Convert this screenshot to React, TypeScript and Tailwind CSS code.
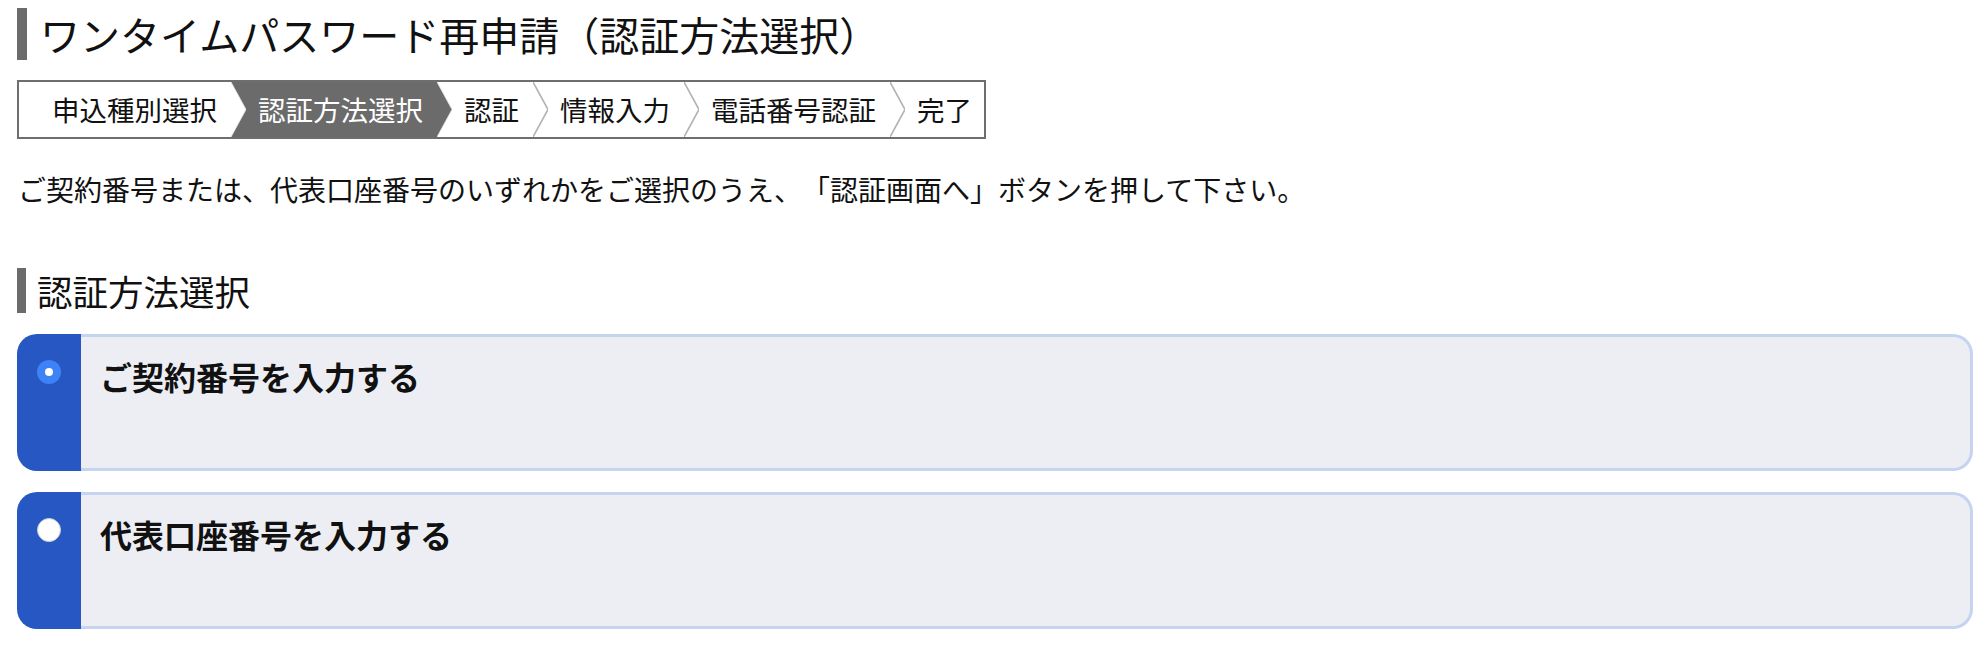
import React from 'react';

const font = { fontFamily: '"Noto Sans CJK JP", "Noto Sans", sans-serif' };

const steps = ['申込種別選択', '認証方法選択', '認証', '情報入力', '電話番号認証', '完了'];
const activeStep = 1;

function Separator({ left, right }: { left: boolean; right: boolean }) {
  return (
    <svg className="w-[15px] h-full shrink-0" viewBox="0 0 15 55" preserveAspectRatio="none">
      {right && <polygon points="0,0 15,0 15,55 0,55 15,27.5" fill="#6b6b6b" />}
      {left && <polygon points="0,0 15,27.5 0,55" fill="#6b6b6b" />}
      {!left && !right && (
        <polyline points="0,0 15,27.5 0,55" fill="none" stroke="#b3b3b3" strokeWidth="1.6" />
      )}
      {(left || right) && (
        <polyline points="0,0 15,27.5 0,55" fill="none" stroke="#e6e6e6" strokeWidth="0.8" />
      )}
    </svg>
  );
}

function Radio({ checked }: { checked: boolean }) {
  if (checked) {
    return (
      <div className="w-[24px] h-[24px] rounded-full bg-[#3d82f6] flex items-center justify-center">
        <div className="w-[8px] h-[8px] rounded-full bg-white" />
      </div>
    );
  }
  return <div className="w-[24px] h-[24px] rounded-full bg-white border border-[#c8ccd4]" />;
}

function OptionCard({ label, checked }: { label: string; checked: boolean }) {
  return (
    <div className="flex h-[137px]">
      <div className="w-[64px] shrink-0 bg-[#2757c2] rounded-l-[20px] flex justify-center pt-[26px]">
        <Radio checked={checked} />
      </div>
      <div className="flex-1 bg-[#eceef4] border-y-[3px] border-r-[3px] border-[#c4d4f1] rounded-r-[20px] pl-[19px] pt-[15px]">
        <div className="text-[32px] leading-[48px] font-bold text-[#111]">{label}</div>
      </div>
    </div>
  );
}

export default function App() {
  return (
    <div className="bg-white min-h-screen pl-[17px] pt-[8px] text-[#111] [text-spacing-trim:space-all]" style={font}>
      <div className="flex items-center h-[52px]">
        <div className="w-[10px] h-[52px] bg-[#6b6b6b]" />
        <h1 className="ml-[13px] text-[40px] font-normal leading-none">
          ワンタイムパスワード再申請（認証方法選択）
        </h1>
      </div>

      <div className="mt-[20px] inline-flex h-[59px] border-2 border-[#6e6e6e] text-[27.5px]">
        {steps.map((s, i) => (
          <React.Fragment key={s}>
            <div
              className={`flex items-center whitespace-nowrap ${i === 0 ? 'pl-[33px]' : 'pl-[12px]'} ${
                i === steps.length - 1 ? 'pr-[12px]' : 'pr-[14px]'
              } ${i === activeStep ? 'bg-[#6b6b6b] text-white' : 'text-[#111]'}`}
            >
              {s}
            </div>
            {i < steps.length - 1 && <Separator left={i === activeStep} right={i + 1 === activeStep} />}
          </React.Fragment>
        ))}
      </div>

      <p className="mt-[30px] text-[28px] leading-[41px] pl-[1px]">
        ご契約番号または、代表口座番号のいずれかをご選択のうえ、「認証画面へ」ボタンを押して下さい。
      </p>

      <div className="mt-[58px] flex items-center h-[45px]">
        <div className="w-[9px] h-[45px] bg-[#6b6b6b]" />
        <h2 className="ml-[11px] text-[35.5px] font-normal leading-none">認証方法選択</h2>
      </div>

      <div className="mt-[21px] flex flex-col gap-[21px] pr-[1px]">
        <OptionCard label="ご契約番号を入力する" checked={true} />
        <OptionCard label="代表口座番号を入力する" checked={false} />
      </div>
    </div>
  );
}
